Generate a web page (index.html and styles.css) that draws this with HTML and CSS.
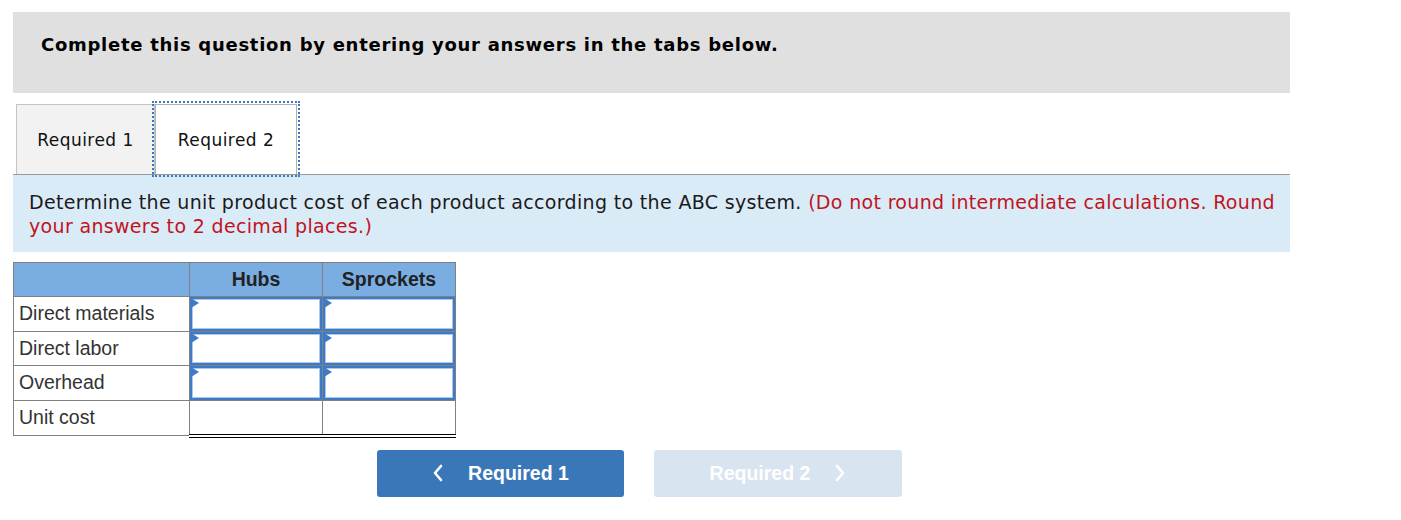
FILE: index.html
```html
<!DOCTYPE html>
<html>
<head>
<meta charset="utf-8">
<link rel="stylesheet" href="styles.css">
</head>
<body>
<div class="page">
  <div class="banner">Complete this question by entering your answers in the tabs below.</div>
  <div class="tabs">
    <div class="tab">Required 1</div>
    <div class="tab active">Required 2</div>
  </div>
  <div class="instr">Determine the unit product cost of each product according to the ABC system. <span class="red">(Do not round intermediate calculations. Round your answers to 2 decimal places.)</span></div>
  <table class="grid">
    <tr class="head"><th class="lbl"></th><th>Hubs</th><th>Sprockets</th></tr>
    <tr><td class="lbl">Direct materials</td><td class="in"><div class="box"></div></td><td class="in"><div class="box"></div></td></tr>
    <tr><td class="lbl">Direct labor</td><td class="in"><div class="box"></div></td><td class="in"><div class="box"></div></td></tr>
    <tr><td class="lbl">Overhead</td><td class="in"><div class="box"></div></td><td class="in"><div class="box"></div></td></tr>
    <tr class="total"><td class="lbl">Unit cost</td><td class="tot"></td><td class="tot"></td></tr>
  </table>
  <div class="nav">
    <div class="btn prev"><svg class="chev" width="12" height="18" viewBox="0 0 12 18"><polyline points="9,2 3,9 9,16" fill="none" stroke="#fff" stroke-width="2.6" stroke-linecap="round" stroke-linejoin="round"/></svg>Required 1</div>
    <div class="btn next">Required 2<svg class="chev" width="12" height="18" viewBox="0 0 12 18"><polyline points="3,2 9,9 3,16" fill="none" stroke="#fff" stroke-width="2.6" stroke-linecap="round" stroke-linejoin="round"/></svg></div>
  </div>
</div>
</body>
</html>
```
FILE: styles.css
```css
html, body { margin: 0; padding: 0; background: #fff; }
.page { padding: 12px 0 0 13px; width: 1277px; }
.banner {
  background: #e0e0e0;
  height: 81px;
  box-sizing: border-box;
  padding: 22px 0 0 28px;
  font-family: "DejaVu Sans", Verdana, sans-serif;
  font-weight: bold;
  font-size: 18px;
  letter-spacing: 0.72px;
  color: #000;
}
.tabs {
  display: flex;
  margin-top: 11px;
  padding-left: 3px;
  border-bottom: 1px solid #9a9a9a;
  height: 70px;
  box-sizing: content-box;
}
.tab {
  width: 139px;
  height: 70px;
  box-sizing: border-box;
  border: 1px solid #c4c4c4;
  border-bottom: none;
  background: #f2f2f2;
  display: flex;
  align-items: center;
  justify-content: center;
  font-family: "DejaVu Sans", Tahoma, sans-serif;
  font-size: 17px;
  letter-spacing: 0.45px;
  color: #111;
}
.tab.active {
  width: 142px;
  background: #fff;
  border: 1px solid #b0b0b0;
  border-bottom: none;
  outline: 2px dotted #3a77c4;
  outline-offset: 1px;
  position: relative;
  z-index: 1;
}
.instr {
  background: #daebf8;
  height: 77px;
  box-sizing: border-box;
  padding: 15px 2px 0 16px;
  font-family: "DejaVu Sans", Tahoma, sans-serif;
  font-size: 19px;
  letter-spacing: 0.33px;
  line-height: 24px;
  color: #1a1a1a;
}
.red { color: #c0141c; }
.grid {
  margin-top: 10px;
  border-collapse: collapse;
  font-family: "Liberation Sans", Arial, sans-serif;
  font-size: 19.5px;
  color: #333;
}
.grid th, .grid td { border: 1px solid #808080; padding: 0; height: 33.5px; }
.grid .head th {
  background: #7aaee3;
  font-weight: bold;
  color: #222;
  height: 33px;
}
.grid th { width: 132px; }
.grid th.lbl, .grid td.lbl { width: 170px; }
.grid td.lbl { padding-left: 5px; text-align: left; }
.grid td.in { padding: 0; vertical-align: top; }
.box {
  height: 33.5px;
  box-sizing: border-box;
  border: 2px solid #3d7bc6;
  box-shadow: inset 0 0 0 1px #a9c8ea;
  position: relative;
  background: #fff;
}
.box::before {
  content: "";
  position: absolute;
  left: -1px;
  top: -1px;
  border-left: 8px solid #3d7bc6;
  border-top: 5px solid transparent;
  border-bottom: 5px solid transparent;
}
.grid .total td { height: 33px; }
.grid .total td.tot { border-bottom: 4px double #000; }
.nav {
  display: flex;
  margin-top: 12px;
  padding-left: 364px;
  gap: 30px;
}
.btn {
  width: 247px;
  height: 47px;
  border-radius: 3px;
  display: flex;
  align-items: center;
  justify-content: center;
  font-family: "Liberation Sans", Arial, sans-serif;
  font-weight: bold;
  font-size: 19.5px;
  color: #fff;
}
.btn.prev { background: #3a77b9; }
.btn.next { background: #d9e4f1; width: 248px; }
.prev .chev { margin-right: 24px; }
.next .chev { margin-left: 24px; }
```
